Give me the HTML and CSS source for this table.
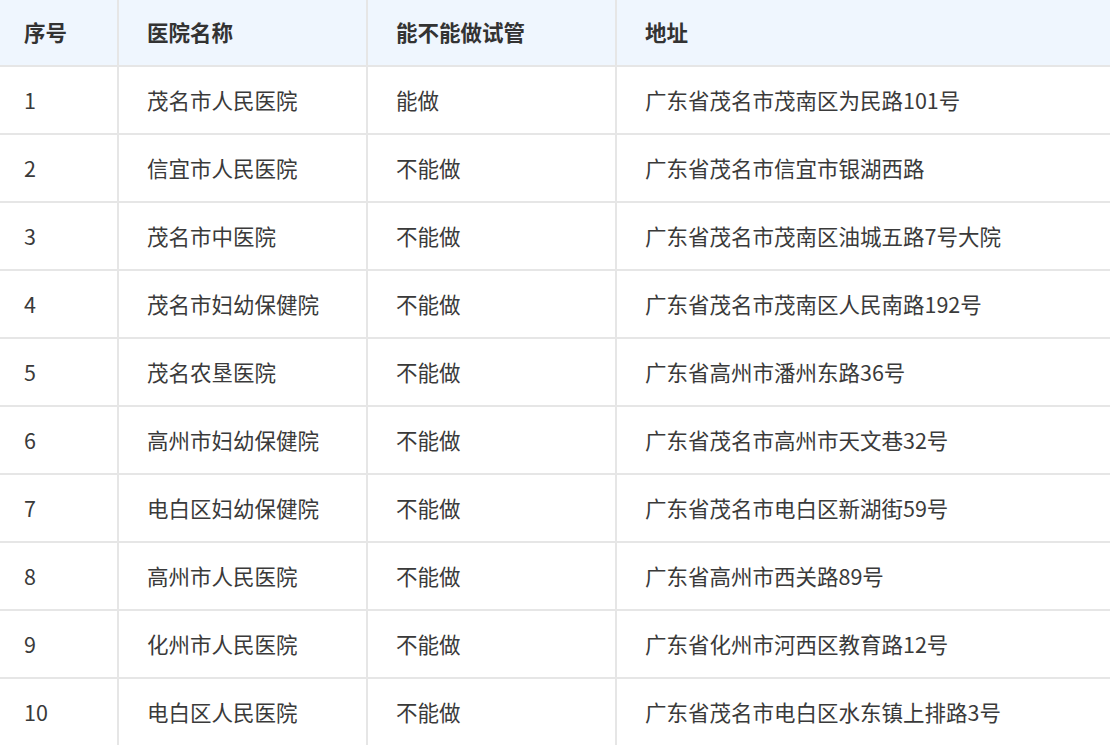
FILE: index.html
```html
<!DOCTYPE html>
<html lang="zh-CN">
<head>
<meta charset="utf-8">
<title>医院列表</title>
<link rel="stylesheet" href="styles.css">
</head>
<body>
<table class="hosp">
  <colgroup>
    <col class="c-no">
    <col class="c-name">
    <col class="c-tube">
    <col class="c-addr">
  </colgroup>
  <thead>
    <tr><th>序号</th><th>医院名称</th><th>能不能做试管</th><th>地址</th></tr>
  </thead>
  <tbody>
    <tr><td>1</td><td>茂名市人民医院</td><td>能做</td><td>广东省茂名市茂南区为民路101号</td></tr>
    <tr><td>2</td><td>信宜市人民医院</td><td>不能做</td><td>广东省茂名市信宜市银湖西路</td></tr>
    <tr><td>3</td><td>茂名市中医院</td><td>不能做</td><td>广东省茂名市茂南区油城五路7号大院</td></tr>
    <tr><td>4</td><td>茂名市妇幼保健院</td><td>不能做</td><td>广东省茂名市茂南区人民南路192号</td></tr>
    <tr><td>5</td><td>茂名农垦医院</td><td>不能做</td><td>广东省高州市潘州东路36号</td></tr>
    <tr><td>6</td><td>高州市妇幼保健院</td><td>不能做</td><td>广东省茂名市高州市天文巷32号</td></tr>
    <tr><td>7</td><td>电白区妇幼保健院</td><td>不能做</td><td>广东省茂名市电白区新湖街59号</td></tr>
    <tr><td>8</td><td>高州市人民医院</td><td>不能做</td><td>广东省高州市西关路89号</td></tr>
    <tr><td>9</td><td>化州市人民医院</td><td>不能做</td><td>广东省化州市河西区教育路12号</td></tr>
    <tr><td>10</td><td>电白区人民医院</td><td>不能做</td><td>广东省茂名市电白区水东镇上排路3号</td></tr>
  </tbody>
</table>
</body>
</html>
```
FILE: styles.css
```css
html, body {
  margin: 0;
  padding: 0;
  overflow: hidden;
  background: #fff;
}
body {
  font-family: "Noto Sans CJK SC", "Noto Sans", sans-serif;
  color: #333;
}
.hosp {
  width: 1110px;
  border-collapse: collapse;
  table-layout: fixed;
}
.c-no { width: 118px; }
.c-name { width: 249px; }
.c-tube { width: 249px; }
.hosp th,
.hosp td {
  text-align: left;
  font-size: 21.5px;
  padding: 0 0 0 28px;
  border-left: 2px solid #e6e6e6;
  border-bottom: 2px solid #e6e6e6;
  white-space: nowrap;
}
.hosp th:first-child,
.hosp td:first-child {
  border-left: none;
  padding-left: 24px;
}
.hosp th {
  height: 62px;
  padding-bottom: 3px;
  background: #eff6fe;
  font-weight: 700;
  color: #333;
}
.hosp td {
  height: 65px;
  padding-bottom: 1px;
  font-weight: 400;
  color: #3a3a3a;
}
```
